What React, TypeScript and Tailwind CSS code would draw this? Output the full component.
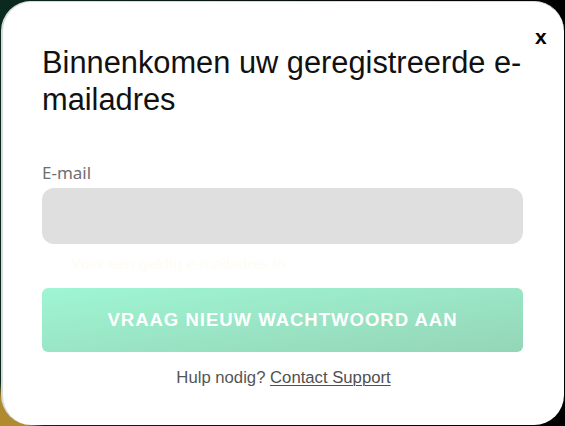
export default function App() {
  return (
    <div className="h-[426px] w-[565px] overflow-hidden bg-[radial-gradient(circle_at_0%_100%,#b08a2e_0,#b08a2e_28px,transparent_44px),linear-gradient(90deg,#0b2a1f,#050a08_60%,#000)]">
      <div className="relative m-px h-[424px] w-[563px] rounded-[30px] border-l-2 border-t border-[#d6dcdc] bg-white px-[39px] pt-[42px]">
        <button className="absolute left-[532px] top-[24px] font-['Liberation_Sans',Arial,sans-serif] text-[21px] font-bold leading-none text-black">
          x
        </button>

        <h2 className="w-[490px] font-['Liberation_Sans',Arial,sans-serif] text-[30.8px] leading-[37px] text-[#111]">
          Binnenkomen uw geregistreerde e-mailadres
        </h2>

        <label className="mt-[43px] block font-['Noto_Sans',sans-serif] text-[17px] leading-[23px] text-[#6f6f6f]">
          E-mail
        </label>
        <input
          type="email"
          className="mt-[4px] block h-[56px] w-[481px] rounded-[12px] bg-[#dfdfdf] px-4 outline-none"
        />
        <p className="mt-[10px] pl-[30px] font-['Noto_Sans',sans-serif] text-[15px] leading-[18px] text-[#fefcf3]">
          Voer een geldig e-mailadres in
        </p>

        <button className="mt-[16px] flex h-[64px] w-[481px] items-center justify-center rounded-[6px] bg-gradient-to-br from-[#9ff6d4] to-[#94d5b7] font-['Liberation_Sans',Arial,sans-serif] text-[18.5px] font-bold uppercase tracking-[1px] text-white">
          Vraag nieuw wachtwoord aan
        </button>

        <p className="mt-[16px] text-center font-['Liberation_Sans',Arial,sans-serif] text-[16.7px] leading-[20px] text-[#555]">
          Hulp nodig?{' '}
          <a className="text-[#505050] underline decoration-1 underline-offset-2">Contact Support</a>
        </p>
      </div>
    </div>
  );
}
